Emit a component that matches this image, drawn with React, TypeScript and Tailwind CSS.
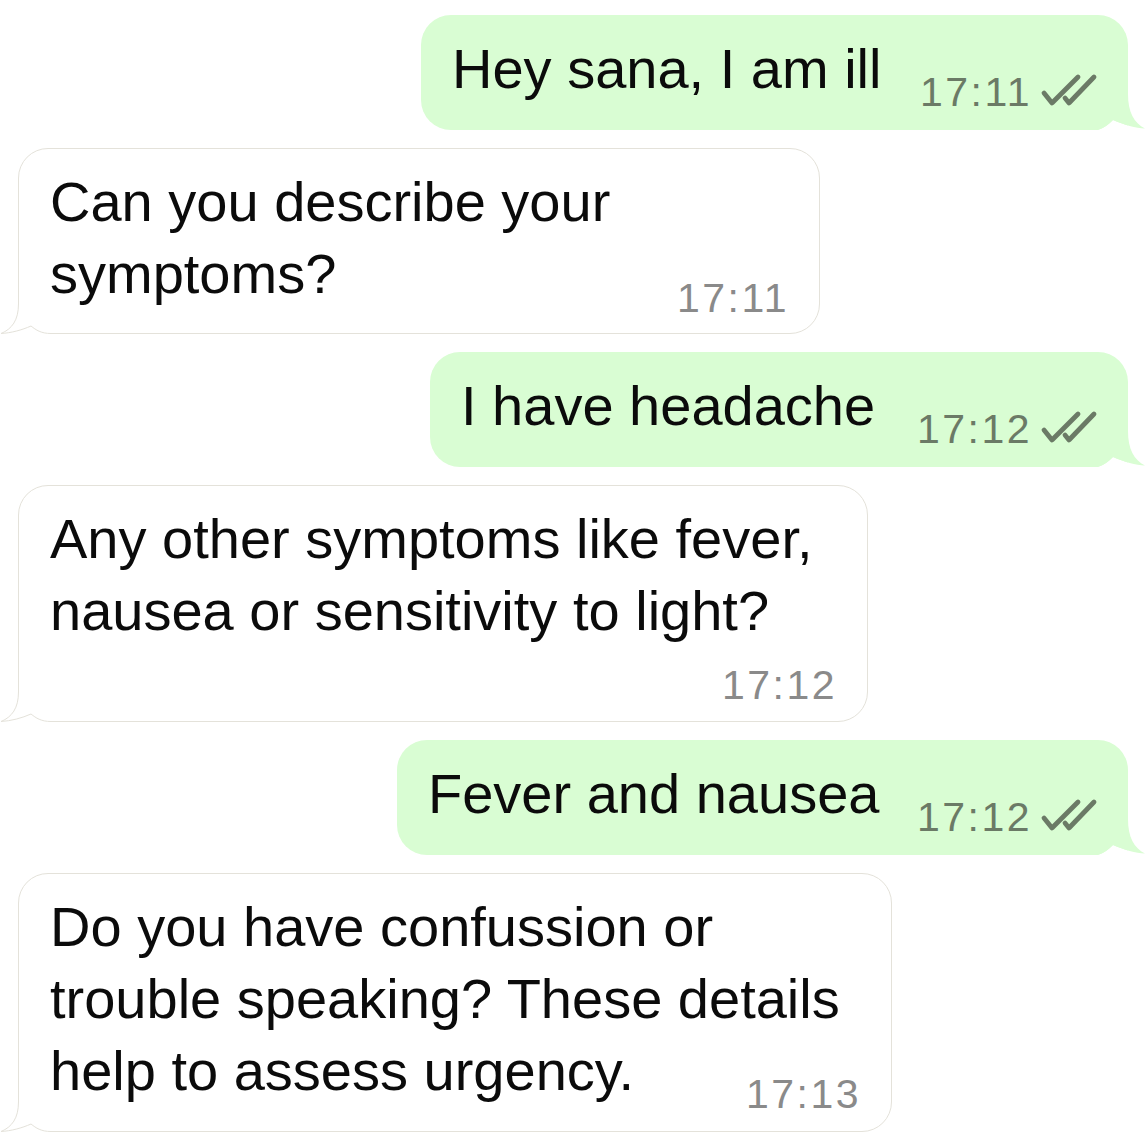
const Ticks = () => (
  <svg
    width="56"
    height="32"
    viewBox="0 0 56 32"
    fill="none"
    stroke="currentColor"
    strokeWidth={4.8}
    strokeLinecap="round"
    strokeLinejoin="round"
    className="overflow-visible"
  >
    <path d="M4 19 L12 29 L38 3" />
    <path d="M25 24 L29 29 L54 3" />
  </svg>
);

type OutProps = { text: string; time: string; width: string };

const Outgoing = ({ text, time, width }: OutProps) => (
  <div className={`relative self-end ${width}`}>
    <div className="flex items-end justify-between rounded-[30px] rounded-br-none bg-[#d9fdd3] pl-[31px] pr-[32px] pt-[18px] pb-[25px]">
      <span className="whitespace-nowrap text-[56px] leading-[72px] text-[#0b0b0b]">{text}</span>
      <span className="-mb-2 flex items-baseline gap-[8px] text-[#6b7a66]">
        <span className="text-[41px] leading-[42px] tracking-[2.5px]">{time}</span>
        <Ticks />
      </span>
    </div>
    {/* tail */}
    <svg className="absolute -right-[18px] bottom-0" width="50" height="36" viewBox="0 0 50 36">
      <path d="M0 36.5 C7 35 12 31 17 26 C28 31 40 34 49 34.5 L50 36.5 Z" fill="#ffffff" />
      <path d="M0 0 L32 0 C32 18 38 29 49 34.5 C40 34 28 31 17 26 C12 31 7 35 0 36 Z" fill="#d9fdd3" />
    </svg>
  </div>
);

type InProps = { lines: string[]; time: string; width: string; timeClass: string };

const Incoming = ({ lines, time, width, timeClass }: InProps) => (
  <div className={`relative self-start ${width}`}>
    <div className="flex flex-col rounded-[30px] rounded-bl-none border border-[#e4e2da] bg-white pl-[31px] pr-[32px] pt-[17px] pb-[15px]">
      <p className="whitespace-nowrap text-[56px] leading-[72px] text-[#0b0b0b]">
        {lines.map((l, i) => (
          <span key={i} className="block">
            {l}
          </span>
        ))}
      </p>
      <span
        className={`-mr-[2px] self-end text-[41px] leading-[42px] tracking-[2.5px] text-[#8a8a8a] ${timeClass}`}
      >
        {time}
      </span>
    </div>
    {/* tail */}
    <svg className="absolute -left-[18px] bottom-0" width="51" height="34" viewBox="0 0 51 34">
      <rect width="51" height="34" fill="#ffffff" />
      <path
        d="M18.5 0 L18.5 4 C18.5 20 12 29 1 33.5 C11 33 22 30 31 26 C36 30 41 33.5 51 33.5"
        stroke="#e4e2da"
        fill="none"
      />
    </svg>
  </div>
);

export default function App() {
  return (
    <div className="min-h-screen w-full bg-white">
      <div className="flex w-[1146px] flex-col gap-[18px] px-[18px] pt-[15px] pb-4 font-['Liberation_Sans',Arial,sans-serif]">
        <Outgoing text="Hey sana, I am ill" time="17:11" width="w-[707px]" />
        <Incoming
          lines={["Can you describe your", "symptoms?"]}
          time="17:11"
          width="w-[802px]"
          timeClass="-mt-[33px] -mb-px"
        />
        <Outgoing text="I have headache" time="17:12" width="w-[698px]" />
        <Incoming
          lines={["Any other symptoms like fever,", "nausea or sensitivity to light?"]}
          time="17:12"
          width="w-[850px]"
          timeClass="mt-[17px]"
        />
        <Outgoing text="Fever and nausea" time="17:12" width="w-[731px]" />
        <Incoming
          lines={["Do you have confussion or", "trouble speaking? These details", "help to assess urgency."]}
          time="17:13"
          width="w-[874px]"
          timeClass="-mt-[34px] mb-px"
        />
      </div>
    </div>
  );
}
